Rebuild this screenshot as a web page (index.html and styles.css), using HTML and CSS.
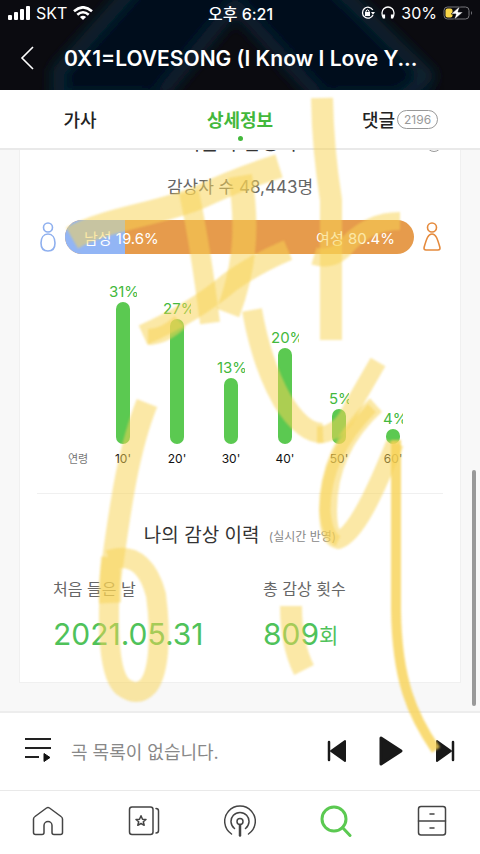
FILE: index.html
```html
<!DOCTYPE html>
<html lang="ko">
<head>
  <meta charset="UTF-8" />
  <meta name="viewport" content="width=device-width, initial-scale=1.0"/>
  <title>상세정보</title>
  <link rel="stylesheet" href="styles.css">
</head>
<body>

<div class="app">
  <header class="header">
    <svg class="header-art" viewBox="0 0 480 90" preserveAspectRatio="none" aria-hidden="true">
      <defs>
        <filter id="soft"><feGaussianBlur stdDeviation="7"/></filter>
      </defs>
      <g filter="url(#soft)">
        <path d="M145 -20L45 100H165L240 5L325 100H440L325 -20Z" fill="#02071a"/>
        <path d="M140 -20L58 72L60 100H150" fill="none" stroke="#0b2634" stroke-width="12"/>
        <path d="M160 96L235 5L322 100" fill="none" stroke="#0a2232" stroke-width="13"/>
        <path d="M330 -20L428 76L400 100H330" fill="none" stroke="#0b2634" stroke-width="12"/>
      </g>
    </svg>

    <div class="status-bar">
      <div class="status-left">
        <svg width="22" height="14" viewBox="0 0 22 14" fill="#fff" aria-hidden="true">
          <rect x="0" y="9" width="4" height="5" rx="1"/>
          <rect x="6" y="6" width="4" height="8" rx="1"/>
          <rect x="12" y="3" width="4" height="11" rx="1"/>
          <rect x="18" y="0" width="4" height="14" rx="1"/>
        </svg>
        <span>SKT</span>
        <svg width="20" height="14" viewBox="0 0 20 14" fill="none" stroke="#fff" stroke-width="2.6" aria-hidden="true">
          <path d="M1 5.2Q10 -2.6 19 5.2M4.3 8.7Q10 3.8 15.700 8.7"/>
          <path d="M10 14L6.900 10.900Q10 8.400 13.100 10.900Z" fill="#fff" stroke="none"/>
        </svg>
      </div>
      <span class="status-time">오후 6:21</span>
      <div class="status-right">
        <svg width="14" height="14" viewBox="0 0 14 14" fill="none" stroke="#fff" stroke-width="1.3" aria-hidden="true">
          <path d="M11.800 4A5.500 5.500 0 1 0 12 9"/>
          <path d="M10 6H14L12 8.800Z" fill="#fff" stroke="none"/>
          <rect x="4" y="6" width="5" height="4" fill="#fff" stroke="none"/>
          <path d="M5 6V4.800Q6.500 2.800 8 4.800V6" stroke-width="1"/>
        </svg>
        <svg width="14" height="14" viewBox="0 0 14 14" fill="none" stroke="#fff" stroke-width="1.3" aria-hidden="true">
          <path d="M2.500 12Q1 10 1 7A6 6 0 0 1 13 7Q13 10 11.500 12"/>
          <path d="M3 8.500V12.500M11 8.500V12.500" stroke-width="2.200"/>
        </svg>
        <span>30%</span>
        <svg width="30" height="14" viewBox="0 0 30 14" aria-hidden="true">
          <rect x="1" y="1" width="25" height="12" rx="3.500" fill="none" stroke="#77777b"/>
          <path d="M28 5Q30 7 28 9Z" fill="#77777b"/>
          <rect x="2.500" y="2.500" width="7" height="9" rx="2" fill="#f9d648"/>
          <path d="M17 0L8 8H13L11 14L20 6H15Z" fill="#fff" stroke="#0b0b10" stroke-width=".6"/>
        </svg>
      </div>
    </div>

    <div class="title-bar">
      <button type="button" class="back-btn" aria-label="뒤로">
        <svg width="14" height="24" viewBox="0 0 14 24" fill="none" stroke="#fff" stroke-width="1.600"><path d="M13 1L2 12L13 23"/></svg>
      </button>
      <h1>0X1=LOVESONG (I Know I Love Y...</h1>
    </div>
  </header>

  <nav class="tabs">
    <button type="button" class="tab">가사</button>
    <button type="button" class="tab active">상세정보</button>
    <button type="button" class="tab">댓글<span class="badge">2196</span></button>
  </nav>

  <main class="content">
    <section class="card">
      <div class="card-title">
        <h2>지금의 감상자</h2>
        <span class="info"></span>
      </div>
      <p class="listeners">감상자 수 48,443명</p>

      <div class="gender">
        <svg width="16" height="30" viewBox="0 0 16 30" fill="none" stroke="#8fb0ef" stroke-width="1.600" aria-hidden="true">
          <circle cx="8" cy="5.500" r="4.500"/>
          <path d="M8 12C3.500 12 1 16 1 21C1 26 3.500 29 8 29S15 26 15 21C15 16 12.500 12 8 12Z"/>
        </svg>
        <div class="gender-bar">
          <div class="male" style="width: 17.3%"></div>
          <span>남성 19.6%</span>
          <span>여성 80.4%</span>
        </div>
        <svg width="18" height="30" viewBox="0 0 18 30" fill="none" stroke="#e58a3c" stroke-width="1.600" aria-hidden="true">
          <circle cx="9" cy="5.500" r="4.500"/>
          <path d="M9 12C5 12 3.500 17 1.200 25Q.500 28 3 28H15Q17.500 28 16.800 25C14.500 17 13 12 9 12Z"/>
        </svg>
      </div>

      <div class="chart">
        <span class="axis-label">연령</span>
        <div class="col"><span class="pct">31%</span><i class="bar" style="height: 142px"></i><span class="age">10'</span></div>
        <div class="col"><span class="pct">27%</span><i class="bar" style="height: 125px"></i><span class="age">20'</span></div>
        <div class="col"><span class="pct">13%</span><i class="bar" style="height: 66px"></i><span class="age">30'</span></div>
        <div class="col"><span class="pct">20%</span><i class="bar" style="height: 96px"></i><span class="age">40'</span></div>
        <div class="col"><span class="pct short">5%</span><i class="bar" style="height: 35px"></i><span class="age">50'</span></div>
        <div class="col"><span class="pct short">4%</span><i class="bar" style="height: 15px"></i><span class="age">60'</span></div>
      </div>

      <div class="history">
        <h2>나의 감상 이력 <small>(실시간 반영)</small></h2>
        <dl class="stats">
          <div>
            <dt>처음 들은 날</dt>
            <dd>2021.05.31</dd>
          </div>
          <div>
            <dt>총 감상 횟수</dt>
            <dd>809<span>회</span></dd>
          </div>
        </dl>
      </div>
    </section>
    <div class="scrollbar"></div>
  </main>

  <div class="player">
    <button type="button" aria-label="재생목록">
      <svg width="26" height="26" viewBox="0 0 26 26" aria-hidden="true">
        <path d="M0 1H26M0 10H26M0 19H14" stroke="#222" stroke-width="1.800"/>
        <path d="M19 15.500L25 19.500L19 23.500Z" fill="#111" stroke="#111" stroke-linejoin="round"/>
      </svg>
    </button>
    <p>곡 목록이 없습니다.</p>
    <div class="controls">
      <button type="button" aria-label="이전 곡">
        <svg width="20" height="30" viewBox="0 0 20 30" fill="#191919" stroke="#191919" stroke-width="2" stroke-linejoin="round"><path d="M2 6V24" stroke-width="2.500" stroke-linecap="round"/><path d="M18 5V25L4 15Z"/></svg>
      </button>
      <button type="button" aria-label="재생">
        <svg width="24" height="30" viewBox="0 0 24 30" fill="#191919" stroke="#191919" stroke-width="3" stroke-linejoin="round"><path d="M2 2V28L22 15Z"/></svg>
      </button>
      <button type="button" aria-label="다음 곡">
        <svg width="20" height="30" viewBox="0 0 20 30" fill="#191919" stroke="#191919" stroke-width="2" stroke-linejoin="round"><path d="M18 6V24" stroke-width="2.500" stroke-linecap="round"/><path d="M2 5V25L16 15Z"/></svg>
      </button>
    </div>
  </div>

  <nav class="bottom-nav">
    <a href="#" aria-label="홈">
      <svg width="32" height="32" viewBox="0 0 32 32"><path d="M3.500 29.500Q1.500 29.500 1.500 27.500V14Q1.500 12.500 3 11.500L14.500 3Q16 2 17.500 3L29 11.500Q30.500 12.500 30.500 14V27.500Q30.500 29.500 28.500 29.500H22Q20 29.500 20 27.500V20.500A4 4 0 0 0 12 20.500V27.500Q12 29.500 10 29.500Z"/></svg>
    </a>
    <a href="#" aria-label="추천">
      <svg width="32" height="32" viewBox="0 0 32 32"><rect x="1.500" y="2" width="23.500" height="27.500" rx="2.500"/><path d="M28 3.500Q30.500 3.500 30.500 6V25.500Q30.500 28 28 28M13 10.800L14.500 14.200L18 14.500L15.300 16.800L16.200 20.300L13 18.500L9.800 20.300L10.700 16.800L8 14.500L11.500 14.200Z"/></svg>
    </a>
    <a href="#" aria-label="라디오">
      <svg width="32" height="32" viewBox="0 0 32 32"><circle cx="16" cy="16.500" r="3"/><path d="M16 20V30.500" stroke-width="2.500"/><path d="M7.500 29A15.300 15.300 0 1 1 24.500 29M10.500 23.500A9 9 0 1 1 21.500 23.500"/></svg>
    </a>
    <a href="#" class="current" aria-label="검색">
      <svg width="32" height="32" viewBox="0 0 32 32"><circle cx="14" cy="14" r="12"/><path d="M22.500 22.500L30 30.500"/></svg>
    </a>
    <a href="#" aria-label="보관함">
      <svg width="32" height="32" viewBox="0 0 32 32"><rect x="2.500" y="1.500" width="27" height="28.500" rx="2.500"/><path d="M2.500 16H29.500M14 9H18M14 23H18"/></svg>
    </a>
  </nav>

  <!-- highlighter pen -->
  <svg class="marker" viewBox="0 0 480 854" preserveAspectRatio="none" aria-hidden="true">
    <path d="M72 238C105 219 160 214 200 197Q235 180 279 166" stroke-width="24"/>
    <path d="M189 192Q201 250 210 323" stroke-width="20"/>
    <path d="M240 176C249 230 244 270 228 313" stroke-width="24"/>
    <path d="M143 335Q195 312 230 282Q255 264 288 250" stroke-width="21"/>
    <path d="M148 337Q164 337 180 322" stroke-width="16"/>
    <path d="M322 98Q323 150 331 200V340" stroke-width="22"/>
    <path d="M314 256Q334 262 348 244Q370 221 400 221" stroke-width="18"/>
    <path d="M252 310Q261 362 282 400Q303 434 323 433" stroke-width="20"/>
    <path d="M317 435Q340 435 352 407L378 362" stroke-width="17"/>
    <path d="M376 405C343 435 328 472 328 510Q328 538 338 540C356 535 376 490 395 443" stroke-width="18"/>
    <path d="M372 408C340 440 325 475 325 510Q327 536 338 541" stroke-width="11"/>
    <path class="solid" d="M396 440V610C397 680 412 715 436 750" stroke-width="10"/>
    <path d="M147 403C128 450 120 510 113 560Q109 580 110 603" stroke-width="22"/>
    <path d="M109 560C137 551 150 572 156 595C162 640 158 674 148 686Q137 698 122 686C106 670 108 610 111 557" stroke-width="20"/>
    <path d="M291 606Q291 644 304 670" stroke-width="22"/>
  </svg>
</div>

</body>
</html>
```
FILE: styles.css
```css
* {
  margin: 0;
  padding: 0;
  box-sizing: border-box;
  font-family: Inter, "Noto Sans CJK KR", sans-serif;
}

body {
  background: #fff;
  color: #333;
}

button {
  background: none;
  border: none;
  cursor: pointer;
}

svg {
  display: block;
}

.app {
  position: relative;
  min-height: 100vh;
  display: flex;
  flex-direction: column;
  overflow: hidden;
}

/* header */
.header {
  position: relative;
  background: #0b0b10;
  color: #fff;
  overflow: hidden;
}

.header-art {
  position: absolute;
  inset: 0;
  width: 100%;
  height: 100%;
}

.status-bar {
  position: relative;
  display: grid;
  grid-template-columns: 1fr auto 1fr;
  align-items: center;
  height: 26px;
  padding: 0 7px 0 8px;
  font-size: 16px;
}

.status-left,
.status-right {
  display: flex;
  align-items: center;
  gap: 6px;
}

.status-right {
  justify-content: flex-end;
}

.status-time {
  font-weight: 500;
}

.title-bar {
  position: relative;
  display: flex;
  align-items: center;
  gap: 30px;
  height: 64px;
  padding: 0 20px;
}

.title-bar h1 {
  font-size: 21px;
  font-weight: 600;
  white-space: nowrap;
}

/* tabs */
.tabs {
  display: flex;
  height: 60px;
  border-bottom: 2px solid #e9e9e9;
}

.tab {
  position: relative;
  flex: 1;
  display: flex;
  align-items: center;
  justify-content: center;
  gap: 2px;
  font-size: 18px;
  font-weight: 500;
  color: #222;
}

.tab.active {
  color: #43b83c;
  font-weight: 700;
}

.tab.active::after {
  content: "";
  position: absolute;
  bottom: 7px;
  width: 5px;
  height: 5px;
  border-radius: 50%;
  background: #43b83c;
}

.badge {
  padding: 0 6px;
  border: 1px solid #999;
  border-radius: 10px;
  font-size: 12px;
  font-weight: 400;
  line-height: 17px;
  color: #999;
}

/* content */
.content {
  position: relative;
  flex: 1;
  padding: 0 19px 28px;
  background: #f8f8f8;
  overflow: hidden;
}

.card {
  height: 100%;
  background: #fff;
  border: 1px solid #f0f0f0;
  border-top: none;
}

/* scrolled almost out of view under the tabs */
.card-title {
  position: relative;
  margin-top: -19px;
  text-align: center;
}

.card-title h2 {
  font-size: 20px;
  font-weight: 400;
  line-height: 24px;
}

.info {
  position: absolute;
  right: 18px;
  bottom: 3px;
  width: 16px;
  height: 16px;
  border: 1px solid #999;
  border-radius: 50%;
}

.listeners {
  margin-top: 19px;
  text-align: center;
  font-size: 17px;
  line-height: 26px;
  color: #666;
}

.gender {
  display: flex;
  align-items: center;
  gap: 9px;
  margin-top: 20px;
  padding: 0 19px 0 20px;
}

.gender-bar {
  position: relative;
  flex: 1;
  display: flex;
  align-items: center;
  justify-content: space-between;
  height: 34px;
  padding: 0 19px;
  border-radius: 17px;
  background: #e69b4c;
  color: #fff;
  font-size: 15px;
  overflow: hidden;
}

.gender-bar span {
  position: relative;
}

.male {
  position: absolute;
  left: 0;
  top: 0;
  height: 100%;
  background: #92b5f5;
}

.chart {
  display: flex;
  align-items: flex-end;
  height: 215px;
  padding: 0 40px 0 48px;
}

.axis-label {
  width: 28px;
  font-size: 11px;
  line-height: 20px;
  color: #777;
}

.col {
  flex: 1;
  display: flex;
  flex-direction: column;
  align-items: center;
}

.pct {
  width: 28px;
  overflow: hidden;
  white-space: nowrap;
  font-size: 15px;
  line-height: 20px;
  color: #43b83c;
}

.pct.short {
  width: 20px;
}

.bar {
  width: 14px;
  border-radius: 7px;
  background: #5bc951;
}

.age {
  margin-top: 5px;
  font-size: 12px;
  line-height: 20px;
  color: #111;
}

/* history */
.history {
  margin: 24px 17px 0;
  padding-top: 27px;
  border-top: 1px solid #f0f0f0;
}

.history h2 {
  text-align: center;
  font-size: 19px;
  font-weight: 400;
  line-height: 30px;
}

.history small {
  margin-left: 4px;
  font-size: 12px;
  color: #888;
  vertical-align: middle;
}

.stats {
  display: grid;
  grid-template-columns: 1fr 1fr;
  gap: 30px;
  margin-top: 24px;
  padding: 0 0 26px 16px;
}

.stats dt {
  font-size: 16px;
  line-height: 26px;
  color: #666;
}

.stats dd {
  margin-top: 12px;
  font-size: 30px;
  line-height: 40px;
  color: #4fc25a;
}

.stats dd span {
  font-size: 21px;
  vertical-align: 2px;
}

.scrollbar {
  position: absolute;
  right: 4px;
  bottom: 5px;
  width: 4px;
  height: 42%;
  border-radius: 2px;
  background: #999;
}

/* player */
.player {
  display: flex;
  align-items: center;
  gap: 20px;
  height: 79px;
  padding: 0 25px 2px;
  border-top: 2px solid #ededed;
}

.player p {
  flex: 1;
  font-size: 18px;
  color: #888;
}

.controls {
  display: flex;
  align-items: center;
  gap: 32px;
}

.bottom-nav {
  display: flex;
  height: 64px;
  border-top: 1px solid #e9e9e9;
}

.bottom-nav a {
  flex: 1;
  display: flex;
  justify-content: center;
  padding-top: 14px;
}

.bottom-nav svg {
  fill: none;
  stroke: #444;
  stroke-width: 1.5;
  stroke-linecap: round;
  stroke-linejoin: round;
}

.bottom-nav .current svg {
  stroke: #5bc951;
  stroke-width: 3;
}

/* pen strokes over the page */
.marker {
  position: absolute;
  inset: 0;
  width: 100%;
  height: 100%;
  pointer-events: none;
  filter: blur(1px);
}

.marker path {
  fill: none;
  stroke: #f8d254;
  stroke-opacity: 0.52;
  stroke-linejoin: round;
}

.marker .solid {
  stroke-opacity: 0.8;
}
```
